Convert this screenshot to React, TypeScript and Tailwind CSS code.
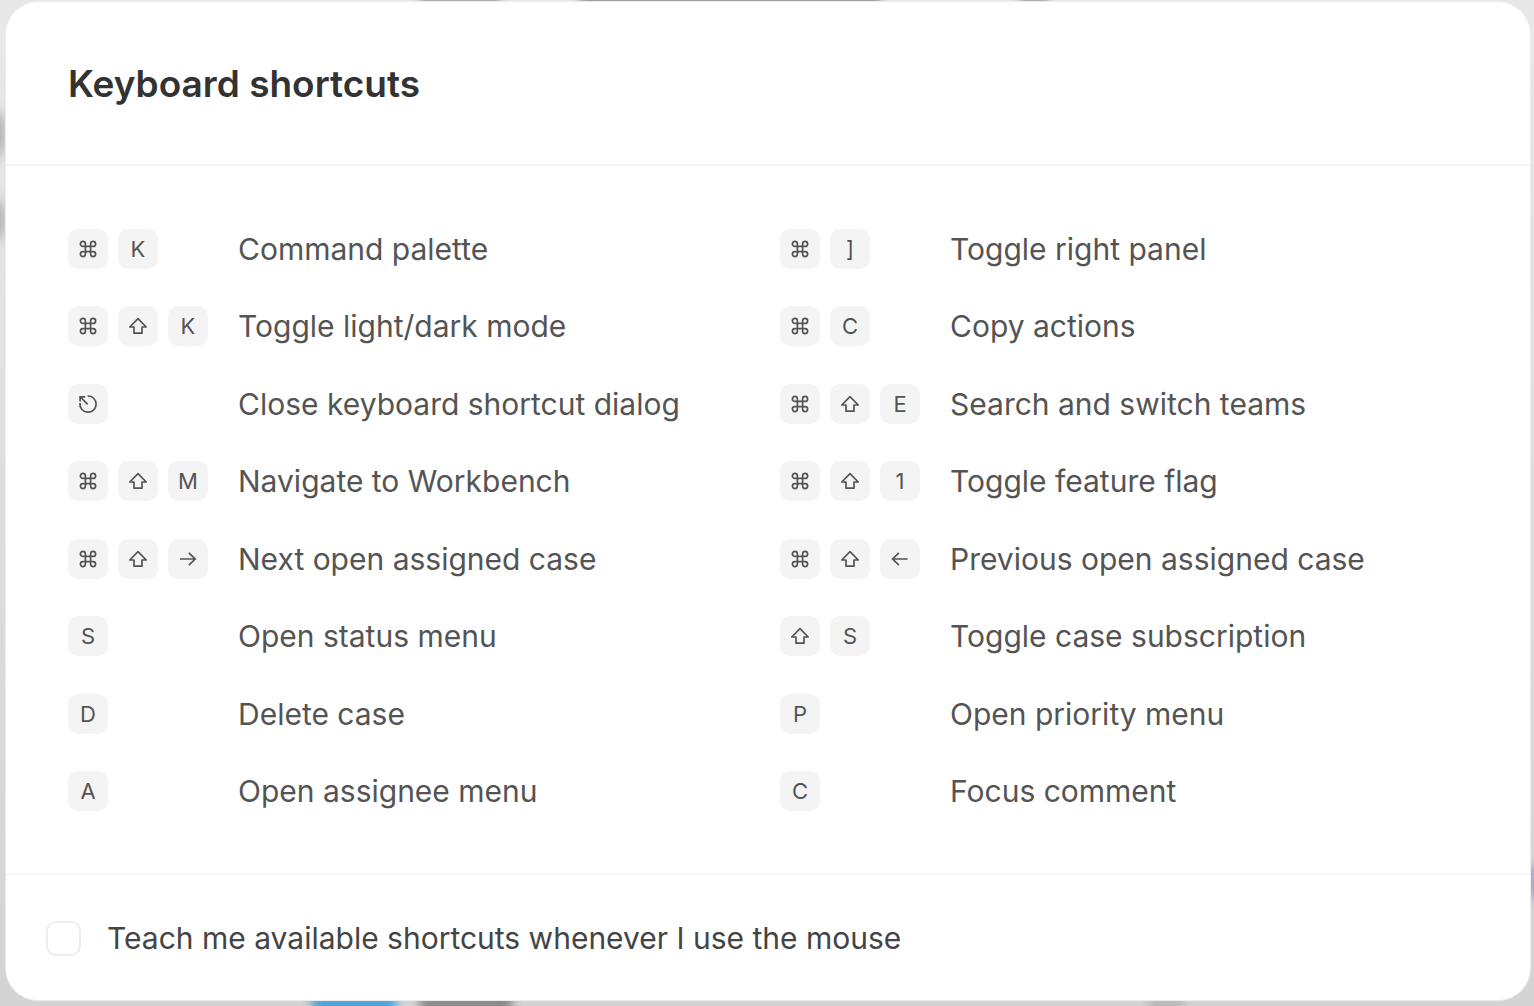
import type { ReactNode } from "react";

type Shortcut = { keys: string[]; label: string };

const shortcuts: Shortcut[] = [
  { keys: ["cmd", "K"], label: "Command palette" },
  { keys: ["cmd", "]"], label: "Toggle right panel" },
  { keys: ["cmd", "shift", "K"], label: "Toggle light/dark mode" },
  { keys: ["cmd", "C"], label: "Copy actions" },
  { keys: ["esc"], label: "Close keyboard shortcut dialog" },
  { keys: ["cmd", "shift", "E"], label: "Search and switch teams" },
  { keys: ["cmd", "shift", "M"], label: "Navigate to Workbench" },
  { keys: ["cmd", "shift", "1"], label: "Toggle feature flag" },
  { keys: ["cmd", "shift", "right"], label: "Next open assigned case" },
  { keys: ["cmd", "shift", "left"], label: "Previous open assigned case" },
  { keys: ["S"], label: "Open status menu" },
  { keys: ["shift", "S"], label: "Toggle case subscription" },
  { keys: ["D"], label: "Delete case" },
  { keys: ["P"], label: "Open priority menu" },
  { keys: ["A"], label: "Open assignee menu" },
  { keys: ["C"], label: "Focus comment" },
];

function Glyph({ label, children }: { label: string; children: ReactNode }) {
  return (
    <svg
      role="img"
      aria-label={label}
      viewBox="0 0 20 20"
      className="size-5 fill-none stroke-[#545454] stroke-[1.7]"
      strokeLinejoin="miter"
    >
      {children}
    </svg>
  );
}

const glyphs: Record<string, ReactNode> = {
  cmd: (
    <Glyph label="Command">
      <path d="M7.4 7.4H4.9A2.5 2.5 0 1 1 7.4 4.9V15.1A2.5 2.5 0 1 1 4.9 12.6H15.1A2.5 2.5 0 1 1 12.6 15.1V4.9A2.5 2.5 0 1 1 15.1 7.4Z" />
    </Glyph>
  ),
  shift: (
    <Glyph label="Shift">
      <path d="M10 2.7L18.2 11H14V17.2H6V11H1.8Z" strokeLinejoin="round" />
    </Glyph>
  ),
  esc: (
    <Glyph label="Escape">
      <path d="M9.6 2A8.1 8.1 0 1 1 2 9M9.7 10.3L2.4 3M2.1 7.4V2.8H7.2" />
    </Glyph>
  ),
  right: (
    <Glyph label="Right arrow">
      <path d="M2 10H17.2M10.9 3.8L17.2 10L10.9 16.2" />
    </Glyph>
  ),
  left: (
    <Glyph label="Left arrow">
      <path d="M17.6 10H2.6M8.9 3.8L2.6 10L8.9 16.2" />
    </Glyph>
  ),
};

function Key({ name }: { name: string }) {
  return (
    <kbd className="flex size-10 items-center justify-center rounded-[10px] bg-[#f4f4f4] font-['Inter',sans-serif] text-[22px] leading-none text-[#545454]">
      {glyphs[name] ?? name}
    </kbd>
  );
}

function Backdrop() {
  return (
    <div aria-hidden="true" className="absolute inset-0 overflow-hidden">
      <div className="absolute top-28 -left-5 h-11 w-6 rounded-full bg-[#a8a8a8] blur-[7px]" />
      <div className="absolute top-50 -left-5 h-10 w-6 rounded-full bg-[#a8a8a8] blur-[7px]" />
      <div className="absolute -top-2 left-[420px] h-3 w-20 bg-[#999] blur-[4px]" />
      <div className="absolute -top-2 left-[580px] h-3 w-[300px] bg-[#888] blur-[4px]" />
      <div className="absolute -top-2 left-[1020px] h-3 w-7 bg-[#999] blur-[4px]" />
      <div className="absolute -bottom-4 left-[312px] h-12 w-[84px] rounded-lg bg-[#4fa6da] blur-[5px]" />
      <div className="absolute -bottom-4 left-[420px] h-12 w-[92px] rounded-lg bg-[#8c8c8c] blur-[5px]" />
      <div className="absolute -bottom-2 left-[1148px] h-4 w-9 bg-[#b8b8b8] blur-[5px]" />
      <div className="absolute top-[866px] -right-3 h-8 w-5 bg-[#a9a5c8] blur-[6px]" />
    </div>
  );
}

export default function App() {
  return (
    <div className="relative flex min-h-screen bg-linear-to-b from-[#e8e8e8] via-[#dedede] to-[#d3d3d3] pt-0.5 pr-1 pb-1.5 pl-1.5 font-['Inter',sans-serif]">
      <Backdrop />
      <section
        role="dialog"
        aria-labelledby="dialog-title"
        className="relative flex flex-1 flex-col rounded-[32px] bg-white ring-1 ring-[#ececec]"
      >
        <header className="border-b-2 border-[#f5f5f5] px-[62px] pt-[58px] pb-14">
          <h1 id="dialog-title" className="text-[37px] leading-12 font-semibold text-[#333]">
            Keyboard shortcuts
          </h1>
        </header>
        <ul className="grid flex-1 grid-cols-2 content-between gap-x-6 px-[62px] pt-[63px] pb-[62px]">
          {shortcuts.map(({ keys, label }) => (
            <li key={label} className="flex items-center">
              <span className="flex w-[170px] shrink-0 gap-2.5">
                {keys.map((key) => (
                  <Key key={key} name={key} />
                ))}
              </span>
              <span className="text-[30px] leading-10 text-[#545454]">{label}</span>
            </li>
          ))}
        </ul>
        <footer className="border-t-2 border-[#f5f5f5] px-10 pt-[43px] pb-[42px]">
          <label className="flex items-center gap-[26px] text-[30px] leading-10 text-[#444]">
            <input
              type="checkbox"
              className="size-[35px] shrink-0 appearance-none rounded-[10px] border-2 border-[#ededed] bg-white checked:bg-[#545454]"
            />
            Teach me available shortcuts whenever I use the mouse
          </label>
        </footer>
      </section>
    </div>
  );
}
